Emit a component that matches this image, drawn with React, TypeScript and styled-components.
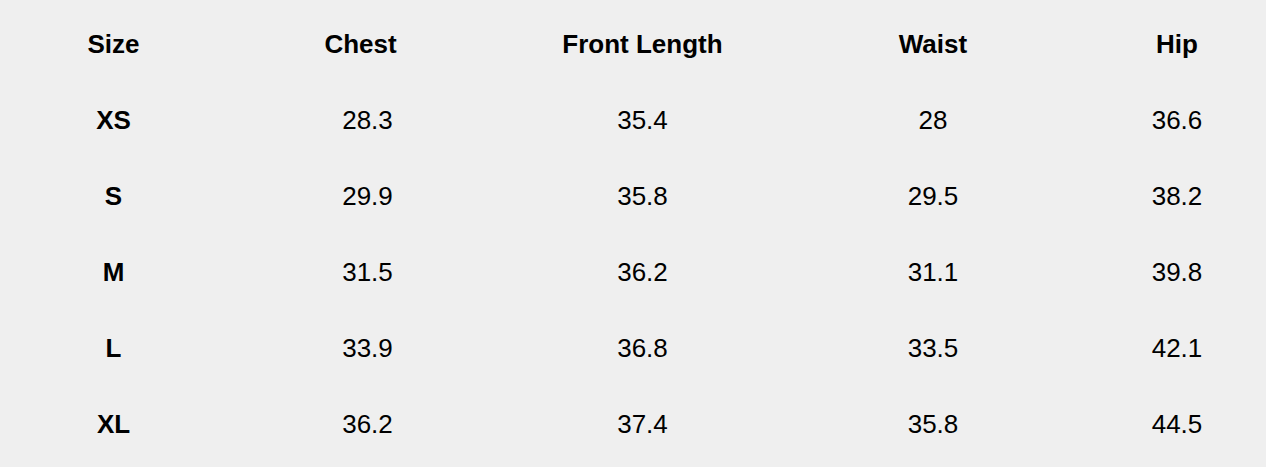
import styled, { createGlobalStyle } from 'styled-components';

const GlobalStyle = createGlobalStyle`
  html, body {
    margin: 0;
    padding: 0;
    background: #efefef;
  }
  body {
    font-family: "Liberation Sans", Arial, sans-serif;
    color: #000;
  }
`;

const Page = styled.div`
  width: 1266px;
  height: 467px;
  overflow: hidden;
  background: #efefef;
  padding-top: 6px;
  box-sizing: border-box;
`;

const Table = styled.div`
  display: grid;
  grid-template-columns: 227px 267px 297px 284px 204px;
  grid-auto-rows: 76px;
  width: 1279px;
`;

interface CellProps {
  $head?: boolean;
  $shift?: number;
}

const Cell = styled.div<CellProps>`
  display: flex;
  align-items: center;
  justify-content: center;
  font-size: 26px;
  font-weight: ${(props) => (props.$head ? 700 : 400)};
  padding-left: ${(props) => props.$shift || 0}px;
  box-sizing: border-box;
  white-space: nowrap;
`;

const columns = ['Size', 'Chest', 'Front Length', 'Waist', 'Hip'];

const rows = [
  ['XS', '28.3', '35.4', '28', '36.6'],
  ['S', '29.9', '35.8', '29.5', '38.2'],
  ['M', '31.5', '36.2', '31.1', '39.8'],
  ['L', '33.9', '36.8', '33.5', '42.1'],
  ['XL', '36.2', '37.4', '35.8', '44.5'],
];

export default function App() {
  return (
    <Page>
      <GlobalStyle />
      <Table>
        {columns.map((c) => <Cell key={c} $head>{c}</Cell>)}
        {rows.map((row) => row.map((v, i) => (
          <Cell key={`${row[0]}-${i}`} $head={i === 0} $shift={i === 1 ? 14 : 0}>{v}</Cell>
        )))}
      </Table>
    </Page>
  );
}
